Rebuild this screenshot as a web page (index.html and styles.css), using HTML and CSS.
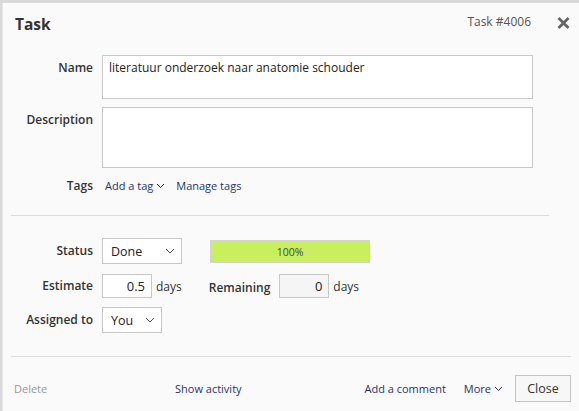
FILE: index.html
```html
<!DOCTYPE html>
<html>
<head>
<meta charset="utf-8">
<link rel="stylesheet" href="styles.css">
</head>
<body>
<div class="modal">
  <div class="header">
    <h1 class="title">Task</h1>
    <div class="header-right">
      <span class="task-id">Task #4006</span>
      <svg class="close-x" width="13" height="12" viewBox="0 0 13 12"><path d="M1.5 1 L11.5 11 M11.5 1 L1.5 11" stroke="#666" stroke-width="2.8" stroke-linecap="butt"/></svg>
    </div>
  </div>
  <div class="form">
    <div class="row row-name">
      <label class="label">Name</label>
      <div class="textbox name-box">literatuur onderzoek naar anatomie schouder</div>
    </div>
    <div class="row row-desc">
      <label class="label">Description</label>
      <div class="textbox desc-box"></div>
    </div>
    <div class="row row-tags">
      <label class="label">Tags</label>
      <div class="tags">
        <span class="link">Add a tag<svg class="chev" width="9" height="6" viewBox="0 0 9 6"><path d="M1 1 L4.5 4.5 L8 1" fill="none" stroke="#24356a" stroke-width="1"/></svg></span>
        <span class="link">Manage tags</span>
      </div>
    </div>
  </div>
  <hr class="divider short">
  <div class="form form2">
    <div class="row row-status">
      <label class="label">Status</label>
      <div class="field-line">
        <div class="select status-select"><span>Done</span><svg class="chev-s" width="10" height="6" viewBox="0 0 10 6"><path d="M1 1 L5 5 L9 1" fill="none" stroke="#555" stroke-width="1"/></svg></div>
        <div class="progress">100%</div>
      </div>
    </div>
    <div class="row row-est">
      <label class="label">Estimate</label>
      <div class="field-line">
        <div class="num">0.5</div><span class="unit">days</span>
        <span class="label remaining">Remaining</span>
        <div class="num readonly">0</div><span class="unit">days</span>
      </div>
    </div>
    <div class="row row-assign">
      <label class="label">Assigned to</label>
      <div class="field-line">
        <div class="select assign-select"><span>You</span><svg class="chev-s" width="10" height="6" viewBox="0 0 10 6"><path d="M1 1 L5 5 L9 1" fill="none" stroke="#555" stroke-width="1"/></svg></div>
      </div>
    </div>
  </div>
  <hr class="divider">
  <div class="footer">
    <span class="delete">Delete</span>
    <span class="link activity">Show activity</span>
    <div class="footer-right">
      <span class="link comment">Add a comment</span>
      <span class="link more">More<svg class="chev" width="9" height="6" viewBox="0 0 9 6"><path d="M1 1 L4.5 4.5 L8 1" fill="none" stroke="#24356a" stroke-width="1"/></svg></span>
      <button class="btn">Close</button>
    </div>
  </div>
</div>
</body>
</html>
```
FILE: styles.css
```css
html, body {
  margin: 0;
  padding: 0;
  background: #d9d9d9;
  height: 100%;
  overflow: hidden;
}
body {
  padding: 3px 0 0 2px;
  box-sizing: border-box;
  font-family: "Open Sans", "DejaVu Sans", sans-serif;
  color: #333;
  font-size: 12px;
}
.modal {
  background: #fafafa;
  height: 420px;
  padding: 0 8px;
  box-sizing: border-box;
  border-left: 1px solid #e6e6e6;
}
.header {
  display: flex;
  justify-content: space-between;
  align-items: flex-start;
  height: 48px;
  padding-left: 4px;
}
.title {
  margin: 0;
  font-size: 15.5px;
  font-weight: 700;
  line-height: 20px;
  padding-top: 11px;
  color: #333;
}
.header-right {
  display: flex;
  align-items: center;
  padding-top: 10px;
  padding-right: 1px;
}
.task-id {
  font-size: 12px;
  color: #555;
  line-height: 18px;
}
.close-x {
  margin-left: 26px;
  margin-top: 1px;
}
.form {
  display: flex;
  flex-direction: column;
}
.row {
  display: grid;
  grid-template-columns: 82px 1fr;
  column-gap: 9px;
  align-items: start;
}
.label {
  text-align: right;
  color: #333;
  font-size: 12px;
  font-weight: 600;
  line-height: 18px;
}
.row-name { margin-top: 4px; }
.row-name .label { padding-top: 4px; }
.textbox {
  width: 431px;
  box-sizing: border-box;
  background: #fff;
  border: 1px solid #c8c8c8;
  padding: 3px 6px;
  line-height: 18px;
  font-size: 12px;
  color: #222;
}
.name-box { height: 44px; }
.row-desc { margin-top: 8px; }
.row-desc .label { padding-top: 4px; }
.desc-box { height: 61px; }
.row-tags { margin-top: 9px; }
.tags {
  display: flex;
  gap: 11px;
  padding-left: 3px;
  line-height: 18px;
}
.link {
  color: #24356a;
  font-size: 11px;
  line-height: 18px;
  white-space: nowrap;
}
.chev {
  margin-left: 3px;
  vertical-align: 1px;
}
.divider {
  border: 0;
  border-top: 1px solid #dcdcdc;
  margin: 0;
  width: 560px;
}
.divider.short {
  width: 538px;
  margin-top: 20px;
}
.form2 {
  margin-top: 22px;
}
.field-line {
  display: flex;
  align-items: center;
}
.row-status .label { padding-top: 4px; }
.select {
  box-sizing: border-box;
  background: #fff;
  border: 1px solid #c8c8c8;
  height: 26px;
  display: flex;
  align-items: center;
  justify-content: space-between;
  padding: 0 6px 0 8px;
  font-size: 12.5px;
  color: #222;
}
.status-select { width: 80px; }
.assign-select { width: 60px; }
.progress {
  margin-left: 28px;
  width: 160px;
  height: 23px;
  box-sizing: border-box;
  background: #c8ef5e;
  border: 1px solid #d2d2d2;
  font-size: 10.5px;
  color: #444;
  display: flex;
  align-items: center;
  justify-content: center;
  margin-top: 1px;
}
.row-est { margin-top: 10px; }
.row-est .label { padding-top: 3px; }
.num {
  width: 50px;
  height: 24px;
  box-sizing: border-box;
  background: #fff;
  border: 1px solid #c8c8c8;
  text-align: right;
  padding: 0 6px;
  line-height: 22px;
  font-size: 13px;
  color: #222;
}
.num.readonly {
  background: #f5f5f5;
}
.unit {
  margin-left: 4px;
  color: #333;
  font-size: 12px;
}
.remaining {
  margin-left: 27px;
  margin-right: 9px;
}
.row-assign { margin-top: 9px; }
.row-assign .label { padding-top: 4px; }
.form2 + .divider {
  margin-top: 23px;
}
.footer {
  display: flex;
  align-items: center;
  margin-top: 18px;
  padding-left: 3px;
}
.delete {
  color: #999;
  font-size: 11px;
  width: 161px;
}
.footer-right {
  margin-left: auto;
  display: flex;
  align-items: center;
}
.comment { margin-right: 18px; }
.more { margin-right: 12px; }
.btn {
  font-family: "Open Sans", "DejaVu Sans", sans-serif;
  font-size: 12.5px;
  color: #333;
  background: #f7f7f7;
  border: 1px solid #c4c4c4;
  width: 56px;
  height: 27px;
  padding: 0;
}
```
